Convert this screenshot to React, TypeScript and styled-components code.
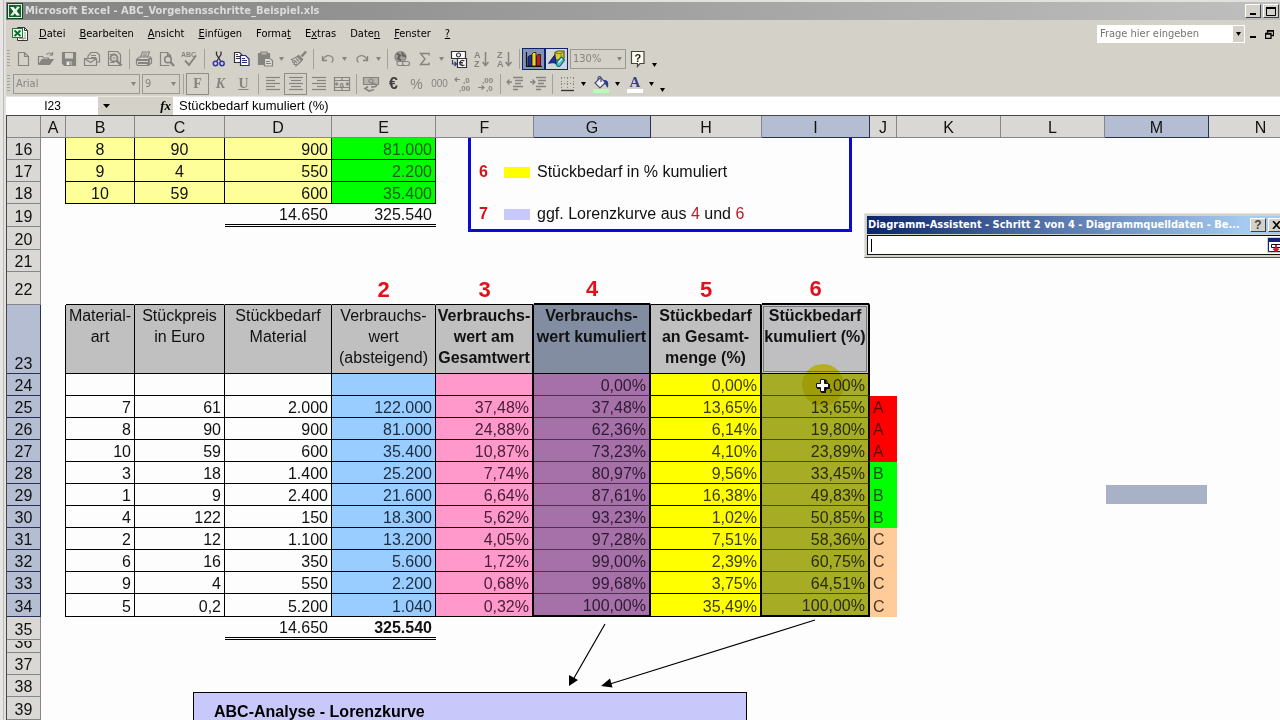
import React from 'react';
import styled, { createGlobalStyle, css } from 'styled-components';

const ui = `'DejaVu Sans Condensed', 'Liberation Sans', sans-serif`;
const arial = `'Liberation Sans', Arial, sans-serif`;
const face = '#d4d1c8';
const grey = '#86847f';

const GlobalStyle = createGlobalStyle`
  * { box-sizing: border-box; }
  body { margin: 0; background: #dcdbd7; font-family: ${arial}; }
  button, input, select { font: inherit; color: inherit; margin: 0; padding: 0; border: 0; background: none; border-radius: 0; }
`;

/* ---------- window frame ---------- */

const Page = styled.div`
  min-height: 100vh;
  padding: 2px 0 0 6px;
  overflow: hidden;
  display: flex;
  flex-direction: column;
  background: linear-gradient(90deg, #e6e6e4 0 3px, #bdbcb8 3px 4px, #e2e1dd 4px 100%);
`;

const TitleBar = styled.header`
  height: 18px;
  display: flex;
  align-items: center;
  gap: 2px;
  padding: 0 1px;
  background: linear-gradient(90deg, #828282, #bfbfbf);
  color: #dcdcdc;
`;

const Title = styled.h1`
  flex: 1;
  margin: 0;
  font: bold 11px/18px ${ui};
  white-space: nowrap;
`;

const FrameButton = styled.button`
  width: 16px;
  height: 14px;
  display: grid;
  place-items: center;
  background: ${face};
  color: #000;
  border: 1px solid;
  border-color: #fff #404040 #404040 #fff;
`;

const MenuBar = styled.nav`
  height: 26px;
  display: flex;
  align-items: center;
  padding: 2px 3px 0 6px;
  background: ${face};
  font: 11px/16px ${ui};
`;

const MenuList = styled.div`
  flex: 1;
  display: flex;
  gap: 14px;
  margin-left: 10px;
`;

const MenuItem = styled.button`
  white-space: nowrap;
`;

const Ask = styled.div`
  width: 148px;
  height: 18px;
  display: flex;
  background: #fff;
  padding: 1px;
  input { flex: 1; min-width: 0; padding-left: 2px; outline: 0; }
  input::placeholder { color: #77756f; opacity: 1; }
  button { width: 11px; background: ${face}; display: grid; place-items: center; }
`;

const ChildButton = styled.button`
  width: 16px;
  height: 16px;
  display: grid;
  place-items: center;
`;

/* ---------- toolbars ---------- */

const Bar = styled.div`
  height: 25px;
  display: flex;
  align-items: center;
  background: ${face};
  color: ${grey};
`;

const Grip = styled.span`
  width: 3px;
  height: 17px;
  margin: 0 1px;
  background: repeating-linear-gradient(180deg, #a3a19a 0 1px, transparent 1px 3px);
`;

const Separator = styled.span`
  width: 6px;
  height: 20px;
  display: flex;
  justify-content: center;
  &::after { content: ''; width: 1px; background: #a3a19a; }
`;

const Tool = styled.button<{ $state?: 'boxed' | 'pressed' | 'lit' }>`
  flex: none;
  width: 23px;
  height: 22px;
  display: grid;
  place-items: center;
  ${p => p.$state === 'boxed' && css`border: 1px solid #8f8d88;`}
  ${p => p.$state === 'pressed' && css`border: 1px solid #0a246a; background: #8592b5;`}
  ${p => p.$state === 'lit' && css`border: 1px solid #0a246a; background: #d4d5d8;`}
`;

const Drop = styled.button<{ $dark?: boolean }>`
  flex: none;
  width: 11px;
  height: 22px;
  display: grid;
  place-items: center;
  color: ${p => (p.$dark ? '#000' : grey)};
`;

const More = styled(Drop)`
  align-items: end;
  padding-bottom: 3px;
`;

const Combo = styled.label<{ $w: number }>`
  flex: none;
  width: ${p => p.$w}px;
  height: 20px;
  display: flex;
  align-items: center;
  border: 1px solid #9b9993;
  margin-left: 2px;
  padding-right: 3px;
  font: 11px/16px ${ui};
  select { flex: 1; min-width: 0; appearance: none; padding-left: 2px; outline: 0; }
  svg { pointer-events: none; }
`;

const Letter = styled.span<{ $i?: boolean; $u?: boolean }>`
  font: bold 14px/16px 'Liberation Serif', serif;
  font-style: ${p => (p.$i ? 'italic' : 'normal')};
  text-decoration: ${p => (p.$u ? 'underline' : 'none')};
`;

const Sign = styled.span<{ $dark?: boolean; $size: number }>`
  font: ${p => (p.$dark ? 'bold ' : '')}${p => p.$size}px/${p => p.$size}px ${arial};
  color: ${p => (p.$dark ? '#44423e' : 'inherit')};
`;

const FormulaBar = styled.div`
  height: 19px;
  display: flex;
  background: #fff;
  border-top: 1px solid #e6e5e0;
`;

const NameBox = styled.input`
  width: 92px;
  padding-left: 1px;
  text-align: center;
  font: 12px/18px ${arial};
  outline: 0;
`;

const FormulaTools = styled.div`
  width: 75px;
  display: flex;
  justify-content: space-between;
  align-items: center;
  padding: 0 2px 0 5px;
  background: ${face};
  button { display: flex; align-items: center; }
`;

const Fx = styled.button`
  font: italic bold 13px/16px 'Liberation Serif', serif;
`;

const FormulaInput = styled.input`
  flex: 1;
  padding-left: 6px;
  font: 13px/18px ${arial};
  outline: 0;
`;

/* ---------- sheet ---------- */

const Sheet = styled.main`
  position: relative;
  flex: 1;
  overflow: hidden;
  background: #fdfdfd;
  border-top: 1px solid #45454a;
  border-left: 1px solid #45454a;
`;

const Grid = styled.table`
  width: 100%;
  table-layout: fixed;
  border-collapse: separate;
  border-spacing: 0;
  font: 16px/18px ${arial};
  color: #111;
`;

const Row = styled.tr<{ $h: number }>`
  > * { height: ${p => p.$h}px; padding: 0; white-space: nowrap; }
`;

const Heading = styled.th<{ $on?: boolean; $low?: boolean }>`
  && { padding-top: ${p => (p.$low === undefined ? 0 : 3)}px; }
  font-weight: normal;
  text-align: center;
  vertical-align: ${p => (p.$low ? 'bottom' : 'middle')};
  background: ${p => (p.$on ? '#b4bdd2' : '#d9d8d4')};
  border-right: 1px solid ${p => (p.$on ? '#26305a' : '#85858a')};
  border-bottom: 1px solid ${p => (p.$on ? '#26305a' : '#85858a')};
`;

const Clip = styled.div`
  height: 11px;
  overflow: hidden;
  display: flex;
  justify-content: center;
  align-items: flex-end;
`;

type CellSpec = {
  t?: React.ReactNode;
  bg?: string;
  fg?: string;
  al?: 'left' | 'center' | 'right';
  bold?: boolean;
  big?: boolean;
  head?: boolean;
  sum?: boolean;
  active?: boolean;
  inset?: boolean;
  right?: string;
  bottom?: string;
};

const cellPadding = (c: CellSpec) => {
  if (c.head || !c.t) return '0';
  return c.sum ? '2px 4px 0' : c.bottom === thick ? '2px 3px 0' : '3px 3px 0';
};

const Cell = styled.td<{ $c: CellSpec }>`
  background: ${p => p.$c.bg || 'transparent'};
  color: ${p => p.$c.fg || 'inherit'};
  text-align: ${p => p.$c.al || 'right'};
  font-weight: ${p => (p.$c.bold ? 'bold' : 'normal')};
  border-right: ${p => p.$c.right || '1px solid transparent'};
  border-bottom: ${p => p.$c.bottom || '1px solid transparent'};
  && { padding: ${p => cellPadding(p.$c)}; }
  ${p => p.$c.big && css`color: #e3101c; font-size: 22px;`}
  ${p => p.$c.head && css`vertical-align: top; line-height: 21px; white-space: pre !important;`}
  ${p => p.$c.active && css`box-shadow: inset 0 0 0 1px #c8c8c8, inset 0 0 0 2px #77777b;`}
  ${p => p.$c.inset && css`&& { padding: 1px; } background-clip: content-box;`}
`;

const COLS: [string, number][] = [
  ['A', 25], ['B', 69], ['C', 90], ['D', 107], ['E', 104], ['F', 98], ['G', 117],
  ['H', 111], ['I', 108], ['J', 27], ['K', 104], ['L', 104], ['M', 104], ['N', 104],
];

const line = '1px solid #000';
const thick = '2px solid #000';
const edge: CellSpec = { right: line, bottom: '0 none' };

type RowSpec = { n: number; h: number; cells: Record<string, CellSpec> };

const upper = (n: number, b: string, c: string, d: string, e: string): RowSpec => ({
  n, h: 22,
  cells: {
    A: edge,
    B: { t: b, al: 'center', bg: '#ffff99', right: line, bottom: line },
    C: { t: c, al: 'center', bg: '#ffff99', right: line, bottom: line },
    D: { t: d, bg: '#ffff99', right: line, bottom: line },
    E: { t: e, bg: '#00ff00', fg: '#1c5c14', right: line, bottom: line },
  },
});

const classes: Record<string, [string, string]> = {
  A: ['#ff0000', '#5c0808'],
  B: ['#00ff00', '#14500f'],
  C: ['#ffcc99', '#4a3826'],
};

const lower = (n: number, v: string[]): RowSpec => {
  const last = n === 34;
  const cls = v[8] && classes[v[8]];
  return {
    n, h: last ? 23 : 22,
    cells: {
      A: edge,
      B: { t: v[0], right: line, bottom: line },
      C: { t: v[1], right: line, bottom: line },
      D: { t: v[2], right: line, bottom: line },
      E: { t: v[3], bg: '#99ccff', fg: '#1c2c40', right: line, bottom: line },
      F: { t: v[4], bg: '#ff99cc', fg: '#4a2038', right: thick, bottom: line },
      G: { t: v[5], bg: '#a671a8', fg: '#2e1a32', right: thick, bottom: last ? thick : '1px solid #4d2f50' },
      H: { t: v[6], bg: '#ffff00', fg: '#3c3c08', right: thick, bottom: line },
      I: { t: v[7], bg: '#a6ad24', fg: '#2a2c0a', right: thick, bottom: last ? thick : '1px solid #4a4d10' },
      J: cls ? { t: v[8], al: 'left', bg: cls[0], fg: cls[1] } : {},
      M: n === 29 ? { inset: true, bg: '#a9b1c7' } : {},
    },
  };
};

const head = (t: string, bg = '#c0c0c0', extra: CellSpec = {}): CellSpec => ({
  t, bg, al: 'center', head: true, right: line, bottom: line, ...extra,
});

const total: CellSpec = { sum: true, right: '0 none', bottom: '3px double #000' };

const ROWS: RowSpec[] = [
  upper(16, '8', '90', '900', '81.000'),
  upper(17, '9', '4', '550', '2.200'),
  upper(18, '10', '59', '600', '35.400'),
  { n: 19, h: 23, cells: { D: { ...total, t: '14.650' }, E: { ...total, t: '325.540' } } },
  { n: 20, h: 23, cells: {} },
  { n: 21, h: 22, cells: {} },
  {
    n: 22, h: 33,
    cells: {
      B: { bottom: line }, C: { bottom: line }, D: { bottom: line },
      E: { t: '2', big: true, bold: true, al: 'center', bottom: line },
      F: { t: '3', big: true, bold: true, al: 'center', bottom: line },
      G: { t: '4', big: true, bold: true, al: 'center', bottom: thick },
      H: { t: '5', big: true, bold: true, al: 'center', bottom: line },
      I: { t: '6', big: true, bold: true, al: 'center', bottom: thick },
    },
  },
  {
    n: 23, h: 69,
    cells: {
      A: edge,
      B: head('Material-\nart'),
      C: head('Stückpreis\nin Euro'),
      D: head('Stückbedarf\nMaterial'),
      E: head('Verbrauchs-\nwert\n(absteigend)'),
      F: head('Verbrauchs-\nwert am\nGesamtwert', '#c0c0c0', { bold: true, right: thick }),
      G: head('Verbrauchs-\nwert kumuliert', '#828da1', { bold: true, right: thick }),
      H: head('Stückbedarf\nan Gesamt-\nmenge (%)', '#c0c0c0', { bold: true, right: thick }),
      I: head('Stückbedarf\nkumuliert (%)', '#bfbfc1', { bold: true, right: thick, active: true }),
    },
  },
  lower(24, ['', '', '', '', '', '0,00%', '0,00%', '0,00%']),
  lower(25, ['7', '61', '2.000', '122.000', '37,48%', '37,48%', '13,65%', '13,65%', 'A']),
  lower(26, ['8', '90', '900', '81.000', '24,88%', '62,36%', '6,14%', '19,80%', 'A']),
  lower(27, ['10', '59', '600', '35.400', '10,87%', '73,23%', '4,10%', '23,89%', 'A']),
  lower(28, ['3', '18', '1.400', '25.200', '7,74%', '80,97%', '9,56%', '33,45%', 'B']),
  lower(29, ['1', '9', '2.400', '21.600', '6,64%', '87,61%', '16,38%', '49,83%', 'B']),
  lower(30, ['4', '122', '150', '18.300', '5,62%', '93,23%', '1,02%', '50,85%', 'B']),
  lower(31, ['2', '12', '1.100', '13.200', '4,05%', '97,28%', '7,51%', '58,36%', 'C']),
  lower(32, ['6', '16', '350', '5.600', '1,72%', '99,00%', '2,39%', '60,75%', 'C']),
  lower(33, ['9', '4', '550', '2.200', '0,68%', '99,68%', '3,75%', '64,51%', 'C']),
  lower(34, ['5', '0,2', '5.200', '1.040', '0,32%', '100,00%', '35,49%', '100,00%', 'C']),
  { n: 35, h: 23, cells: { D: { ...total, t: '14.650' }, E: { ...total, t: '325.540', bold: true } } },
  { n: 36, h: 13, cells: {} },
  { n: 37, h: 22, cells: {} },
  { n: 38, h: 22, cells: {} },
  { n: 39, h: 23, cells: {} },
];

/* ---------- objects floating over the sheet ---------- */

const Legend = styled.section`
  position: absolute;
  left: 461px;
  top: 22px;
  width: 384px;
  padding: 24px 8px 5px;
  border: 3px solid #0a0ad8;
  border-top: 0;
  background: #fdfdfd;
  display: grid;
  grid-template-columns: 25px 33px auto;
  row-gap: 22px;
  align-items: center;
  font: 16px/20px ${arial};
  color: #111;
  b { color: #d8101c; }
  em { color: #b8202c; font-style: normal; }
`;

const Swatch = styled.span<{ $c: string }>`
  width: 26px;
  height: 11px;
  background: ${p => p.$c};
`;

const ChartBox = styled.section`
  position: absolute;
  left: 186px;
  top: 576px;
  bottom: 0;
  width: 554px;
  padding: 9px 20px 0;
  border: 1px solid #000;
  border-bottom: 0;
  background: #c9c8fb;
  overflow: hidden;
  font: bold 16px/20px ${arial};
`;

const Arrows = styled.svg`
  position: absolute;
  left: 553px;
  top: 499px;
`;

const Halo = styled.span`
  position: absolute;
  left: 795px;
  top: 248px;
  width: 42px;
  height: 42px;
  border-radius: 50%;
  background: #f3e830;
  mix-blend-mode: multiply;
`;

const Pointer = styled.svg`
  position: absolute;
  left: 808px;
  top: 262px;
`;

const Dialog = styled.section`
  position: absolute;
  left: 857px;
  right: -10px;
  top: 97px;
  padding: 2px;
  background: ${face};
  border: 1px solid;
  border-color: #e6e4de #404040 #55534f #e6e4de;
`;

const DialogTitle = styled.div`
  height: 18px;
  display: flex;
  align-items: center;
  gap: 2px;
  padding: 0 3px 0 1px;
  background: linear-gradient(90deg, #0a246a, #a6caf0 90%);
  color: #fff;
  h2 { flex: 1; margin: 0; font: bold 11px/18px ${ui}; white-space: nowrap; }
`;

const RangeField = styled.div`
  height: 20px;
  margin-top: 1px;
  padding-right: 2px;
  display: flex;
  align-items: center;
  background: #fff;
  border: 1px solid #111;
  border-right: 0;
  input { flex: 1; min-width: 0; height: 16px; padding-left: 2px; outline: 0; }
`;

const Caret = styled.span`
  width: 1px;
  height: 13px;
  margin-left: 3px;
  background: #000;
`;

const RangeButton = styled.button`
  width: 18px;
  height: 16px;
  display: grid;
  place-items: center;
  background: ${face};
`;

/* ---------- icons ---------- */

const Tri = ({ w = 5 }: { w?: number }) => (
  <svg width={w} height="4" viewBox="0 0 7 4" preserveAspectRatio="none" aria-hidden="true">
    <path d="M0 0h7L3.5 4z" fill="currentColor" />
  </svg>
);

const Glyph = ({ children }: { children: React.ReactNode }) => (
  <svg width="18" height="18" viewBox="0 0 18 18" fill="none" stroke="currentColor" strokeWidth="1.2" aria-hidden="true">
    {children}
  </svg>
);

const AlignGlyph = ({ x }: { x: number[] }) => (
  <Glyph>
    {[2, 5, 8, 11, 14].map((y, i) => (
      <path key={y} d={i % 2 ? `M${x[0]} ${y + 0.5}h${x[1]}` : `M2 ${y + 0.5}h14`} />
    ))}
  </Glyph>
);

const SmallText = ({ x, y, children, size = 8 }: { x: number; y: number; children: string; size?: number }) => (
  <text x={x} y={y} fontSize={size} fontWeight="bold" fontFamily="Liberation Sans" fill="currentColor" stroke="none">{children}</text>
);

const ExcelLogo = () => (
  <svg width="16" height="16" viewBox="0 0 16 16" aria-hidden="true">
    <rect width="16" height="16" fill="#0b4a1e" />
    <rect x="1.5" y="1.5" width="13" height="13" fill="#14602c" stroke="#dfeedd" />
    <path d="M3 4h3.500l6.500 8.500H9.500z" fill="#fff" />
    <path d="M13 4h-3L3 12.500h3z" fill="#e4f0e2" />
    <path d="M8 3h4v1z" fill="#7fc489" />
  </svg>
);

const BookLogo = () => (
  <svg width="17" height="16" viewBox="0 0 17 16" aria-hidden="true">
    <path d="M5.500 1.500h7l3 3v10h-10z" fill="#fff" stroke="#333" />
    <path d="M12.500 1.500v3h3" fill="none" stroke="#333" />
    <path d="M7 12.500h7M13 6v7M11 12v2" stroke="#999" />
    <rect x=".5" y="2.500" width="10" height="9" fill="#e9f5e6" stroke="#1d7a34" />
    <path d="M2.500 4.500l6 5.500M8.500 4.500l-6 5.500" stroke="#15682b" strokeWidth="1.800" />
  </svg>
);

const icons: Record<string, React.ReactNode> = {
  neu: <Glyph><path d="M4.500 2.500h6l4 4v9h-10zM10.500 2.500v4h4" /></Glyph>,
  oeffnen: <Glyph><path d="M1.500 14V6.500h4l1 1.500h5v2" /><path d="M2 14.500l3-5h11l-3.500 5z" fill="currentColor" /><path d="M9.500 4.500c2-2 4-2 5.500 0M15.500 2v3h-3" /></Glyph>,
  speichern: <Glyph><path d="M2.500 2.500h13v13h-11l-2-2z" fill="currentColor" /><path d="M5 3h8v5.500H5z" fill="#d4d1c8" stroke="none" /><path d="M6 11h6v4H6z" fill="#aaa8a2" stroke="none" /><path d="M7 12h2v3H7z" fill="#eee" stroke="none" /></Glyph>,
  email: <Glyph><path d="M1.500 8.500h12v7h-12zM1.500 8.500l6 4 6-4M5 8V6l3-3.500h6l2.500 2.500v7h-3M8 5.500h5M8 7.500h5" /></Glyph>,
  suchen: <Glyph><path d="M2.500 1.500h9l3 3v11h-12z" /><circle cx="8" cy="8" r="3.500" strokeWidth="1.800" /><path d="M10.500 10.500l5 5" strokeWidth="2.400" /><path d="M4 4.500h5M4 12.500h4M6.500 8h3" /></Glyph>,
  drucken: <Glyph><path d="M5.500 7l2-5h7l-2 5" /><path d="M8 4h4M7.500 5.800h4" /><path d="M1.500 9.500l3-2.500h11l1 2v4l-3 2.500h-11l-1-2z" /><path d="M2 10h11l3-2M3 13h10v2M14 10v5" strokeWidth="1.800" /></Glyph>,
  vorschau: <Glyph><path d="M11.500 15.500h-9v-13h7l3 3v2M9.500 2.500v3h3" /><circle cx="10" cy="9.500" r="3.300" strokeWidth="1.600" /><path d="M12.500 12l3.500 4" strokeWidth="2.400" /></Glyph>,
  rechtschr: <Glyph><SmallText x={0} y={7} size={7}>ABC</SmallText><path d="M4 10.500l4 4.500 7-9.500" strokeWidth="1.900" /></Glyph>,
  ausschneiden: <Glyph><path d="M6.500 1.500v3l4.500 7M11 1.500v3l-4.500 7" stroke="#33323c" strokeWidth="1.300" /><circle cx="5.500" cy="13.500" r="2.200" stroke="#3436a4" strokeWidth="1.500" /><circle cx="12" cy="13.500" r="2.200" stroke="#3436a4" strokeWidth="1.500" /></Glyph>,
  kopieren: <Glyph><path d="M1.500 2.500h5l3 3v7h-8z" fill="#fff" stroke="#33323c" /><path d="M3 6.500h4M3 8.500h4M3 4.500h2" stroke="#33323c" /><path d="M7.500 5.500h5l3.500 3.500v6.500H7.500z" fill="#fff" stroke="#26287c" /><path d="M9 8.500h3M9 10.500h5M9 12.500h5" stroke="#26287c" /></Glyph>,
  einfuegen: <Glyph><path d="M2.500 3.500h11v11h-11z" fill="currentColor" /><path d="M5 2h6v3H5z" fill="#bbb9b2" /><path d="M8.500 8.500h5l3 2v5.500h-8z" fill="#dedcd6" /><path d="M10 11.500h4M10 13.500h5" /></Glyph>,
  pinsel: <Glyph><path d="M16 1.500l-4.500 5" strokeWidth="2.600" /><path d="M8 5l5 5M7 6l5 5" strokeWidth="1.500" /><path d="M7.500 6.500l-6 3 1.500 1-.5 1.500 2 .5-.5 2 2 0 0 1.500 5.500-5" /><path d="M4 10l3 3M6 8.500l3 3" /></Glyph>,
  rueck: <Glyph><path d="M3.500 6v4.500h4.500M3.500 10.500c2-4 5-5.500 8-4.500 3 1 3.500 4.500 1 6.500" strokeWidth="1.300" /></Glyph>,
  wieder: <Glyph><path d="M14.500 6v4.500h-4.500M14.500 10.500c-2-4-5-5.500-8-4.500-3 1-3.500 4.500-1 6.500" strokeWidth="1.300" /></Glyph>,
  hyperlink: <Glyph><circle cx="7.500" cy="7" r="5.500" fill="#a09e98" /><path d="M4 3.500l3 2-2 3 3 2M9 2.500l1 3 3 1" stroke="#5c5a56" strokeWidth="1.800" /><rect x="4" y="11.500" width="7" height="4" rx="2" fill="#d4d1c8" /><rect x="9.500" y="11.500" width="7" height="4" rx="2" fill="#d4d1c8" /></Glyph>,
  summe: <Glyph><path d="M13 5.500v-2H4.500L9 9l-4.500 5.500H13v-2" strokeWidth="1.400" /></Glyph>,
  euro: <Glyph><path d="M1.500 1.500h14v7h-14z" fill="#fff" stroke="#333" /><circle cx="8.500" cy="5" r="2" stroke="#333" /><path d="M7.500 8.500h9v9h-9z" fill="#fff" stroke="#333" /><path d="M14.500 11c-3-1.500-4.500 0-4.500 2s1.500 3.500 4.500 2M9 12.500h4M9 14h4" stroke="#333" /><path d="M2.500 10v4h3.500M4.500 12l2 2-2 2" stroke="#33358a" /></Glyph>,
  az: <Glyph><SmallText x={1} y={8} size={9}>A</SmallText><SmallText x={1} y={17} size={9}>Z</SmallText><path d="M12.500 2v13M9.500 12l3 3.500 3-3.500" strokeWidth="1.500" /></Glyph>,
  za: <Glyph><SmallText x={1} y={8} size={9}>Z</SmallText><SmallText x={1} y={17} size={9}>A</SmallText><path d="M12.500 2v13M9.500 12l3 3.500 3-3.500" strokeWidth="1.500" /></Glyph>,
  diagramm: <Glyph><path d="M1.500 2v14.500H17" stroke="#111" /><path d="M3 7l1.500-1.500H7V16H3z" fill="#1c2e9c" stroke="#111" strokeWidth=".8" /><path d="M7 4l1.500-1.500H11V16H7z" fill="#e8d81c" stroke="#111" strokeWidth=".8" /><path d="M11.500 6L13 4.500h2.500V16h-4z" fill="#c81c1c" stroke="#111" strokeWidth=".8" /></Glyph>,
  zeichnen: <Glyph><path d="M7 2.500l3-1.500h6v7l-3 2H7z" fill="#d8cc2a" stroke="#55531c" /><path d="M7 3.500h6l3-2.500M13 3.500V10" stroke="#8a8520" /><path d="M1 13L6.500 5.500l2.500 9-2.500-2z" fill="#1d2fa8" stroke="#14206a" /><path d="M9 11.500l4.500-4.500 3 3-4.500 6c-2.500 1.500-4.500-1-3-4.500z" fill="#46c6cf" stroke="#1a6a74" /><path d="M10.500 12.500l3.500-4" stroke="#e8ffff" /></Glyph>,
  hilfe: <Glyph><path d="M2.500 1.500h12.500v12h-4l-2.500 3v-3h-6z" fill="#fffff0" stroke="#444" /><text x="5.500" y="11.500" fontSize="11" fontWeight="bold" fontFamily="Liberation Sans" fill="#222" stroke="none">?</text></Glyph>,
  verbinden: <Glyph><path d="M1.500 2.500h15v13h-15zM1.500 5.500h15M1.500 12.500h15M9 2.500v3M9 12.500v3M2.500 9h3M12.500 9h3M4.500 7.500l-2 1.500 2 1.500M13.500 7.500l2 1.500-2 1.500" /><SmallText x={6.500} y={11.500} size={8}>a</SmallText></Glyph>,
  waehrung: <Glyph><path d="M1.500 2.500h15v7h-15z" fill="#b5b3ad" /><circle cx="9" cy="6" r="2" /><path d="M9 9.500c3-1 5.500-.5 5.500 1s-3 1.500-5.500 1.500M6 11.500l-3 2 4 2.500 5-1.500" strokeWidth="1.700" /></Glyph>,
  dezplus: <Glyph><SmallText x={9} y={8}>,0</SmallText><SmallText x={5} y={16}>,00</SmallText><path d="M1 4.500h5M3 2.500l-2 2 2 2" /></Glyph>,
  dezminus: <Glyph><SmallText x={5} y={8}>,00</SmallText><SmallText x={9} y={16}>,0</SmallText><path d="M1 12.500h6M4.500 10.500l2.500 2-2.500 2" /></Glyph>,
  einzugminus: <Glyph><path d="M7 2.500h10M9 5.500h8M9 8.500h6M7 11.500h10M7 14.500h5M1 7h5M3.500 4.500L1 7l2.500 2.500" strokeWidth="1.300" /></Glyph>,
  einzugplus: <Glyph><path d="M7 2.500h10M9 5.500h8M9 8.500h6M7 11.500h10M7 14.500h5M1 7h5M3.500 4.500L6 7 3.500 9.500" strokeWidth="1.300" /></Glyph>,
  rahmen: <Glyph><path d="M3 2.500h13M3 8.500h13M3.500 3v11M9.500 3v11M15.500 3v11" strokeDasharray="1 2" strokeWidth="1" /><path d="M3 15.500h13" stroke="#333" strokeWidth="1.300" /></Glyph>,
  fuellen: <Glyph><path d="M3 8l5.500-5.500 5 5L8 13z" fill="#efeef0" stroke="#4a4a78" /><path d="M6 5V3c0-2 3-2 3 0v4" stroke="#4a4a78" /><path d="M12.500 5.500c3 0 3.500 2 3 6-1-1-1.500-2-2.500-4z" fill="#2c3c90" stroke="#2c3c90" /><path d="M1 14h16v4H1z" fill="#b4ffb8" stroke="none" /></Glyph>,
  schrift: <Glyph><text x="3.500" y="12" fontSize="15" fontWeight="bold" fontFamily="Liberation Serif" fill="#3c3f86" stroke="none">A</text><path d="M1 14h16v4H1z" fill="#fff" stroke="none" /></Glyph>,
};

const T = ({ i, label, state }: { i: string; label: string; state?: 'boxed' | 'pressed' | 'lit' }) => (
  <Tool type="button" aria-label={label} $state={state}>{icons[i]}</Tool>
);

const MENU: [string, string, string][] = [
  ['', 'D', 'atei'], ['', 'B', 'earbeiten'], ['', 'A', 'nsicht'], ['', 'E', 'infügen'],
  ['Forma', 't', ''], ['E', 'x', 'tras'], ['Date', 'n', ''], ['', 'F', 'enster'], ['', '?', ''],
];

export default function App() {
  return (
    <Page>
      <GlobalStyle />
      <TitleBar>
        <ExcelLogo />
        <Title>Microsoft Excel - ABC_Vorgehensschritte_Beispiel.xls</Title>
        <FrameButton type="button" aria-label="Minimieren">
          <svg width="10" height="9"><path d="M2 7h6" stroke="#000" strokeWidth="2" /></svg>
        </FrameButton>
        <FrameButton type="button" aria-label="Maximieren">
          <svg width="10" height="9"><path d="M.5 1h9M.5 0v8.500h9V0" fill="none" stroke="#000" /><path d="M0 1h10" stroke="#000" strokeWidth="2" /></svg>
        </FrameButton>
      </TitleBar>

      <MenuBar aria-label="Menüleiste">
        <BookLogo />
        <MenuList>
          {MENU.map(([a, u, b]) => (
            <MenuItem type="button" key={a + u + b}>{a}<u>{u}</u>{b}</MenuItem>
          ))}
        </MenuList>
        <Ask>
          <input aria-label="Frage hier eingeben" placeholder="Frage hier eingeben" />
          <button type="button" aria-label="Fragen anzeigen"><Tri /></button>
        </Ask>
        <ChildButton type="button" aria-label="Arbeitsmappe minimieren">
          <svg width="8" height="8"><path d="M1 7h6" stroke="#000" strokeWidth="2" /></svg>
        </ChildButton>
        <ChildButton type="button" aria-label="Arbeitsmappe wiederherstellen">
          <svg width="9" height="9"><path d="M2.500 3V.5h6v5H6M2 1h7M.5 3.500h5.500v5H.5zM0 4h6" fill="none" stroke="#000" strokeWidth="1.300" /></svg>
        </ChildButton>
      </MenuBar>

      <Bar role="toolbar" aria-label="Standard">
        <Grip />
        <T i="neu" label="Neu" /><T i="oeffnen" label="Öffnen" /><T i="speichern" label="Speichern" />
        <T i="email" label="E-Mail" /><T i="suchen" label="Suchen" />
        <Separator />
        <T i="drucken" label="Drucken" /><T i="vorschau" label="Seitenansicht" /><T i="rechtschr" label="Rechtschreibung" />
        <Separator />
        <T i="ausschneiden" label="Ausschneiden" /><T i="kopieren" label="Kopieren" /><T i="einfuegen" label="Einfügen" />
        <Drop type="button" aria-label="Einfügeoptionen"><Tri /></Drop>
        <T i="pinsel" label="Format übertragen" />
        <Separator />
        <T i="rueck" label="Rückgängig" /><Drop type="button" aria-label="Rückgängig-Liste"><Tri /></Drop>
        <T i="wieder" label="Wiederholen" /><Drop type="button" aria-label="Wiederholen-Liste"><Tri /></Drop>
        <Separator />
        <T i="hyperlink" label="Hyperlink" /><T i="summe" label="AutoSumme" />
        <Drop type="button" aria-label="Weitere Funktionen"><Tri /></Drop>
        <T i="euro" label="Euroumrechnung" /><T i="az" label="Aufsteigend sortieren" /><T i="za" label="Absteigend sortieren" />
        <Separator />
        <T i="diagramm" label="Diagramm-Assistent" state="pressed" /><T i="zeichnen" label="Zeichnen" state="lit" />
        <Combo $w={56}>
          <select aria-label="Zoom" defaultValue="130%"><option>130%</option></select>
          <Tri />
        </Combo>
        <T i="hilfe" label="Hilfe" />
        <More type="button" $dark aria-label="Weitere Schaltflächen"><Tri /></More>
      </Bar>

      <Bar role="toolbar" aria-label="Format">
        <Grip />
        <Combo $w={127}>
          <select aria-label="Schriftart" defaultValue="Arial"><option>Arial</option></select>
          <Tri />
        </Combo>
        <Combo $w={38}>
          <select aria-label="Schriftgrad" defaultValue="9"><option>9</option></select>
          <Tri />
        </Combo>
        <Separator />
        <Tool type="button" aria-label="Fett" $state="boxed"><Letter>F</Letter></Tool>
        <Tool type="button" aria-label="Kursiv"><Letter $i>K</Letter></Tool>
        <Tool type="button" aria-label="Unterstrichen"><Letter $u>U</Letter></Tool>
        <Separator />
        <Tool type="button" aria-label="Linksbündig"><AlignGlyph x={[2, 9]} /></Tool>
        <Tool type="button" aria-label="Zentriert" $state="boxed"><AlignGlyph x={[4, 10]} /></Tool>
        <Tool type="button" aria-label="Rechtsbündig"><AlignGlyph x={[7, 9]} /></Tool>
        <T i="verbinden" label="Verbinden und zentrieren" />
        <Separator />
        <T i="waehrung" label="Währung" />
        <Tool type="button" aria-label="Euro"><Sign $dark $size={16}>€</Sign></Tool>
        <Tool type="button" aria-label="Prozentformat"><Sign $size={14}>%</Sign></Tool>
        <Tool type="button" aria-label="Tausendertrennzeichen"><Sign $size={10}>000</Sign></Tool>
        <T i="dezplus" label="Dezimalstelle hinzufügen" /><T i="dezminus" label="Dezimalstelle löschen" />
        <Separator />
        <T i="einzugminus" label="Einzug verkleinern" /><T i="einzugplus" label="Einzug vergrößern" />
        <Separator />
        <T i="rahmen" label="Rahmen" /><Drop type="button" $dark aria-label="Rahmenarten"><Tri /></Drop>
        <T i="fuellen" label="Füllfarbe" /><Drop type="button" $dark aria-label="Füllfarben"><Tri /></Drop>
        <T i="schrift" label="Schriftfarbe" /><Drop type="button" $dark aria-label="Schriftfarben"><Tri /></Drop>
        <More type="button" $dark aria-label="Weitere Formate"><Tri /></More>
      </Bar>

      <FormulaBar>
        <NameBox aria-label="Namenfeld" defaultValue="I23" />
        <FormulaTools>
          <button type="button" aria-label="Namen anzeigen"><Tri w={7} /></button>
          <Fx type="button">fx</Fx>
        </FormulaTools>
        <FormulaInput aria-label="Bearbeitungsleiste" defaultValue="Stückbedarf kumuliert (%)" />
      </FormulaBar>

      <Sheet>
        <Grid>
          <colgroup>
            <col style={{ width: 34 }} />
            {COLS.map(([k, w]) => <col key={k} style={{ width: w }} />)}
            <col />
          </colgroup>
          <thead>
            <Row $h={22}>
              <Heading />
              {COLS.map(([k]) => <Heading key={k} scope="col" $low={false} $on={'GIM'.includes(k)}>{k}</Heading>)}
              <Heading />
            </Row>
          </thead>
          <tbody>
            {ROWS.map(r => (
              <Row key={r.n} $h={r.h}>
                <Heading scope="row" $on={r.n >= 23 && r.n <= 34} $low={r.n === 36 ? undefined : r.n === 23}>
                  {r.n === 36 ? <Clip>36</Clip> : r.n}
                </Heading>
                {COLS.map(([k]) => {
                  const c = r.cells[k] || {};
                  return <Cell key={k} $c={c}>{c.t}</Cell>;
                })}
                <Cell $c={{}} />
              </Row>
            ))}
          </tbody>
        </Grid>

        <Legend>
          <b>6</b><Swatch $c="#ffff00" /><span>Stückbedarf in % kumuliert</span>
          <b>7</b><Swatch $c="#c9c8fb" /><span>ggf. Lorenzkurve aus <em>4</em> und <em>6</em></span>
        </Legend>

        <Arrows width="260" height="80" viewBox="560 615 260 80" aria-hidden="true">
          <path d="M605 624L574 678M815 620L610 684" stroke="#000" strokeWidth="1.200" />
          <path d="M569 686v-11l9 5zM601 686l9-7.500 2.500 9z" fill="#000" />
        </Arrows>

        <ChartBox>ABC-Analyse - Lorenzkurve</ChartBox>

        <Halo />
        <Pointer width="16" height="16" viewBox="0 0 16 16" aria-hidden="true">
          <path d="M6 2h5v4h4v5h-4v4H6v-4H2V6h4z" fill="#111" />
          <path d="M5.500 1.500h4v4h4v4h-4v4h-4v-4h-4v-4h4z" fill="#fff" stroke="#111" />
        </Pointer>

        <Dialog aria-label="Diagramm-Assistent">
          <DialogTitle>
            <h2>Diagramm-Assistent - Schritt 2 von 4 - Diagrammquelldaten - Be...</h2>
            <FrameButton type="button" aria-label="Hilfe"><Sign $dark $size={12}>?</Sign></FrameButton>
            <FrameButton type="button" aria-label="Schließen">
              <svg width="9" height="8"><path d="M1 0l7 8M8 0L1 8" stroke="#000" strokeWidth="1.600" /></svg>
            </FrameButton>
          </DialogTitle>
          <RangeField>
            <Caret />
            <input aria-label="Datenbereich" />
            <RangeButton type="button" aria-label="Dialog erweitern">
              <svg width="16" height="14" viewBox="0 0 16 14">
                <path d="M.5.500h15v13H.5z" fill="#fff" stroke="#14207c" />
                <path d="M0 0h16v4H0z" fill="#14207c" />
                <path d="M3.500 6.500h9v3h-9z" fill="none" stroke="#111" />
                <path d="M8 7v6M5.500 10.500L8 13l2.500-2.500" fill="none" stroke="#e01020" strokeWidth="1.800" />
              </svg>
            </RangeButton>
          </RangeField>
        </Dialog>
      </Sheet>
    </Page>
  );
}
